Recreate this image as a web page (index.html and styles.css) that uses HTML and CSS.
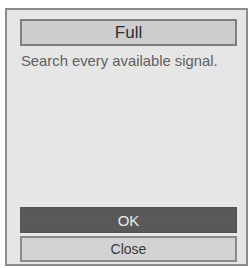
FILE: index.html
```html
<!DOCTYPE html>
<html>
<head>
<meta charset="utf-8">
<link rel="stylesheet" href="styles.css">
</head>
<body>
<div class="dialog">
  <div class="title">Full</div>
  <p class="desc">Search every available signal.</p>
  <div class="spacer"></div>
  <div class="btn ok">OK</div>
  <div class="btn close">Close</div>
</div>
</body>
</html>
```
FILE: styles.css
```css
html, body {
  margin: 0;
  padding: 0;
  background: #ffffff;
}
body {
  font-family: "Liberation Sans", Arial, sans-serif;
  padding: 8px 0 0 5px;
}
.dialog {
  box-sizing: border-box;
  width: 243px;
  height: 258px;
  border: 2px solid #8c8c8c;
  background: #e6e6e6;
  padding: 9px 9px 2px 13px;
  display: flex;
  flex-direction: column;
}
.title {
  box-sizing: border-box;
  height: 27px;
  border: 2px solid #808080;
  background: #cdcdcd;
  color: #2e2e2e;
  font-size: 17px;
  display: flex;
  align-items: center;
  justify-content: center;
}
.desc {
  margin: 7px 0 0 1px;
  font-size: 14.8px;
  color: #606060;
}
.spacer {
  flex: 1;
}
.btn {
  box-sizing: border-box;
  height: 26px;
  display: flex;
  align-items: center;
  justify-content: center;
  font-size: 15px;
}
.ok {
  background: #595959;
  color: #ececec;
  border: 2px solid #555;
}
.close {
  margin-top: 3px;
  background: #d3d3d3;
  color: #3a3a3a;
  border: 2px solid #8a8a8a;
  font-size: 14px;
}
```
